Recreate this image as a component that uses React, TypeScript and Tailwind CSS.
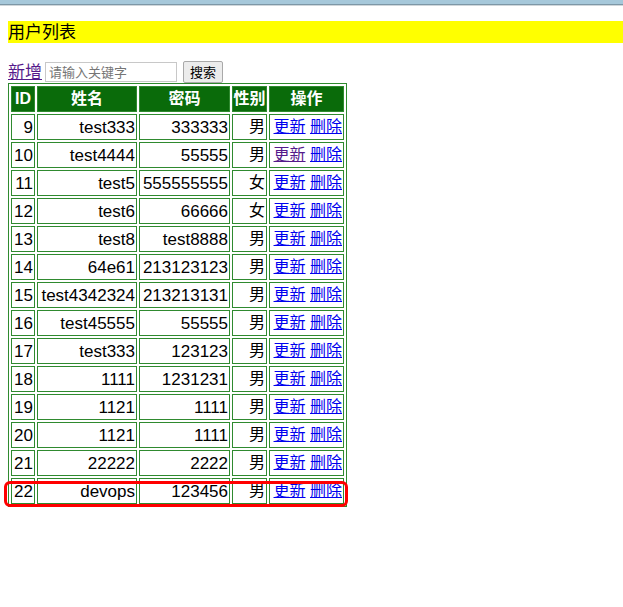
import React from "react";

const rows: [number, string, string, string][] = [
  [9, "test333", "333333", "男"],
  [10, "test4444", "55555", "男"],
  [11, "test5", "555555555", "女"],
  [12, "test6", "66666", "女"],
  [13, "test8", "test8888", "男"],
  [14, "64e61", "213123123", "男"],
  [15, "test4342324", "213213131", "男"],
  [16, "test45555", "55555", "男"],
  [17, "test333", "123123", "男"],
  [18, "1111", "1231231", "男"],
  [19, "1121", "1111", "男"],
  [20, "1121", "1111", "男"],
  [21, "22222", "2222", "男"],
  [22, "devops", "123456", "男"],
];

const font = {
  fontFamily: '"Liberation Sans", "Noto Sans CJK SC", sans-serif',
};

export default function App() {
  return (
    <div className="relative min-h-[607px] w-[623px] bg-white text-black" style={font}>
      <div className="h-[4px] bg-[#a6c8da]" />
      <div className="h-[1px] bg-[#7d97a6]" />
      <div className="h-[1px] bg-[#cfd6da]" />
      <div className="ml-[8px] mt-[15px] flex h-[22px] items-center bg-[#ffff00] text-[17px] leading-none">
        用户列表
      </div>
      <div className="ml-[8px] mt-[18px] flex h-[22px] items-center">
        <a href="#" className="text-[17px] leading-none text-[#551a8b] underline">
          新增
        </a>
        <input
          className="ml-[3px] h-[20px] w-[132px] border border-[#c8c8c8] px-[3px] text-[13px] placeholder:text-[#757575] outline-none"
          placeholder="请输入关键字"
          style={font}
        />
        <button
          className="ml-[6px] h-[22px] w-[40px] rounded-[2px] border border-[#a9a9a9] bg-[#ececec] text-[13px] leading-none"
          style={font}
        >
          搜索
        </button>
      </div>
      <table className="ml-[8px] table-fixed border-separate border-spacing-[2px] border border-[#2f8a2f] text-[17px]">
        <thead>
          <tr className="text-[16px]">
            <th className="h-[26px] w-[24px] whitespace-nowrap border border-[#2f8a2f] bg-[#0a6b0a] p-0 font-bold text-white">ID</th>
            <th className="w-[100px] whitespace-nowrap border border-[#2f8a2f] bg-[#0a6b0a] p-0 font-bold text-white">姓名</th>
            <th className="w-[91px] whitespace-nowrap border border-[#2f8a2f] bg-[#0a6b0a] p-0 font-bold text-white">密码</th>
            <th className="w-[35px] whitespace-nowrap border border-[#2f8a2f] bg-[#0a6b0a] p-0 font-bold text-white">性别</th>
            <th className="w-[75px] whitespace-nowrap border border-[#2f8a2f] bg-[#0a6b0a] p-0 font-bold text-white">操作</th>
          </tr>
        </thead>
        <tbody>
          {rows.map(([id, name, pw, sex]) => (
            <tr key={id}>
              <td className="h-[26px] whitespace-nowrap border border-[#2f8a2f] px-[1px] py-0 text-right leading-none">{id}</td>
              <td className="whitespace-nowrap border border-[#2f8a2f] px-[1px] py-0 text-right leading-none">{name}</td>
              <td className="whitespace-nowrap border border-[#2f8a2f] px-[1px] py-0 text-right leading-none">{pw}</td>
              <td className="whitespace-nowrap border border-[#2f8a2f] px-[1px] py-0 text-right text-[16px] leading-none">{sex}</td>
              <td className="whitespace-nowrap border border-[#2f8a2f] px-[1px] py-0 text-right text-[16px] leading-none">
                <a href="#" className={id === 10 ? "text-[#551a8b] underline" : "text-[#0000ee] underline"}>
                  更新
                </a>{" "}
                <a href="#" className="text-[#0000ee] underline">
                  删除
                </a>
              </td>
            </tr>
          ))}
        </tbody>
      </table>
      <div className="pointer-events-none absolute left-[4px] top-[481px] h-[26px] w-[344px] rounded-[6px] border-[3px] border-[#ff0000]" />
    </div>
  );
}
